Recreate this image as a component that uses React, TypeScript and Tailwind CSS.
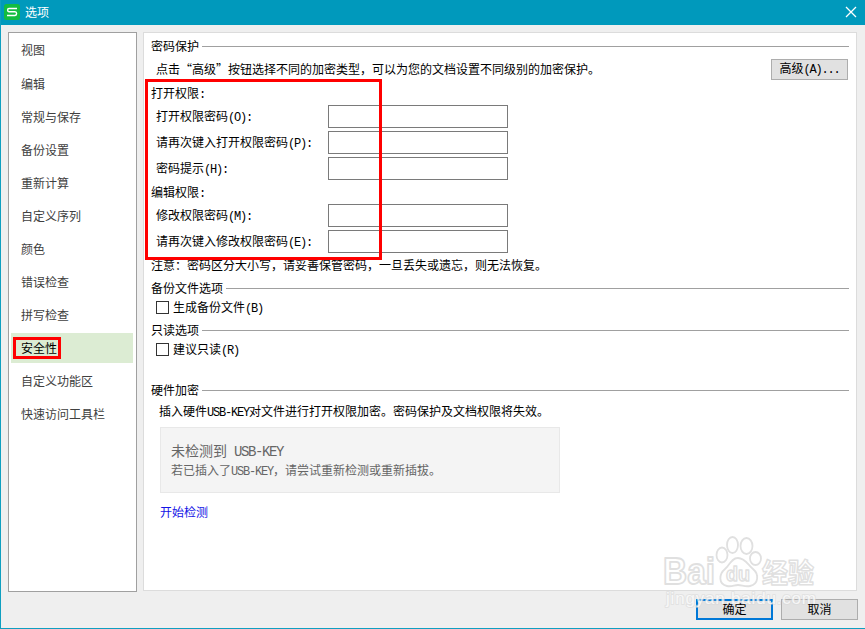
import type { ReactNode } from 'react';

const MENU = [
  '视图',
  '编辑',
  '常规与保存',
  '备份设置',
  '重新计算',
  '自定义序列',
  '颜色',
  '错误检查',
  '拼写检查',
  '安全性',
  '自定义功能区',
  '快速访问工具栏',
];

// Latin runs take half the width of a Chinese character.
function Mixed({ text }: { text: string }) {
  return (
    <span className="whitespace-pre">
      {text.split(/([\x20-\x7e]+)/).map((part, i) =>
        i % 2 ? (
          <span key={i} className="font-['Liberation_Mono',monospace] tracking-[-0.1em]">
            {part}
          </span>
        ) : (
          part
        ),
      )}
    </span>
  );
}

function Section({ title, className, titleClass = '' }: { title: string; className: string; titleClass?: string }) {
  return (
    <div className={`flex items-center gap-[3px] pr-[7px] pl-[7px] ${className}`}>
      <span className={titleClass}>{title}</span>
      <div className="h-px flex-1 bg-[#a0a0a0]" />
    </div>
  );
}

function Field({ label, className = '' }: { label: string; className?: string }) {
  return (
    <label className={`flex h-[23px] items-center pl-3 ${className}`}>
      <span className="w-[172px]">
        <Mixed text={label} />
      </span>
      <input type="password" className="h-[23px] w-[180px] border border-[#7a7a7a] bg-white outline-none" />
    </label>
  );
}

function Check({ label }: { label: string }) {
  return (
    <label className="flex h-[15px] items-center gap-1 pl-3">
      <input type="checkbox" className="size-[13px] appearance-none border border-[#333] bg-white" />
      <Mixed text={label} />
    </label>
  );
}

function Button({ children, className = 'border border-[#adadad]' }: { children: ReactNode; className?: string }) {
  return (
    <button className={`flex h-[21px] w-[77px] items-center justify-center bg-[#e1e1e1] ${className}`}>
      <span className="relative z-10 pb-px">{children}</span>
    </button>
  );
}

function Watermark() {
  return (
    <svg
      className="pointer-events-none absolute top-[530px] left-[654px]"
      width="175"
      height="84"
      fill="#fff"
      stroke="#e0e0e0"
      strokeWidth="1.8"
      strokeLinejoin="round"
    >
      <ellipse cx="67" cy="25" rx="5.5" ry="7.5" />
      <ellipse cx="77.5" cy="15" rx="5.5" ry="8" />
      <ellipse cx="91.5" cy="16" rx="6" ry="8" />
      <ellipse cx="100.5" cy="28.5" rx="5.5" ry="6.5" />
      <path d="M83 28c-7 0-8 7-13 11-6 5-7 15 2 17 5 1 7-1 11-1s7 2 12 1c9-2 9-12 3-17-5-4-8-11-15-11Z" />
      <g fontFamily="Liberation Sans, Noto Sans CJK SC, sans-serif" fontWeight="bold">
        <text x="8" y="54" fontSize="36" textLength="52" lengthAdjust="spacingAndGlyphs">
          Bai
        </text>
        <text x="71" y="51" fontSize="20" textLength="24" lengthAdjust="spacingAndGlyphs" strokeWidth="1.4">
          du
        </text>
        <text x="107" y="53" fontSize="27" textLength="52" lengthAdjust="spacingAndGlyphs" strokeWidth="1.4">
          经验
        </text>
      </g>
      <text
        x="11"
        y="74"
        fontFamily="Liberation Sans, sans-serif"
        fontSize="17"
        textLength="150"
        fillOpacity="0.75"
        stroke="#d8d8d8"
        strokeOpacity="0.55"
        strokeWidth="2"
        paintOrder="stroke"
      >
        jingyan.baidu.com
      </text>
    </svg>
  );
}

export default function App() {
  return (
    <div className="relative flex h-[629px] w-[865px] flex-col overflow-hidden border-b border-l border-[#0f9fc0] bg-[#efefef] font-['Noto_Sans_CJK_SC',sans-serif] text-[12px] leading-none text-black">
      <header className="flex h-[25px] shrink-0 items-center bg-[#0099bc] pr-2 pb-px pl-[3px] text-white">
        <svg width="16" height="16" viewBox="0 0 16 16" fill="none">
          <rect width="16" height="16" rx="2.5" fill="#12bd40" />
          <path
            d="M13 4.5H5Q3.6 4.5 3.6 6T5 7.8H11Q12.6 7.8 12.6 9.6T11 11.5H3"
            stroke="#fff"
            strokeWidth="1.4"
          />
        </svg>
        <span className="ml-[5px] flex-1 pb-px">选项</span>
        <svg width="12" height="12" viewBox="0 0 12 12" stroke="#fff" strokeWidth="1.3">
          <path d="M1 1l10 10M11 1L1 11" />
        </svg>
      </header>

      <div className="mt-[7px] flex items-start gap-1.5 pl-[7px]">
        <nav className="flex h-[560px] w-[129px] flex-col gap-[3px] border border-[#a0a0a0] bg-white px-0.5 pt-[3px] text-[#404040]">
          {MENU.map((item) => (
            <div
              key={item}
              className={`relative flex h-[30px] w-[122px] shrink-0 items-center pl-[10px] first:pb-0.5 ${
                item === '安全性' ? 'bg-[#dcecd3] text-black' : ''
              }`}
            >
              {item}
              {item === '安全性' && (
                <div className="absolute top-1 left-0.5 h-[22px] w-12 border-[3px] border-[#f00]" />
              )}
            </div>
          ))}
        </nav>

        <main className="relative h-[559px] w-[714px] border border-[#dcdcdc] bg-white">
          <Section title="密码保护" className="h-[26px]" />
          <div className="flex h-[21px] items-center justify-between pr-2 pl-3">
            <span className="pb-px">点击“高级”按钮选择不同的加密类型，可以为您的文档设置不同级别的加密保护。</span>
            <Button>
              <Mixed text="高级(A)..." />
            </Button>
          </div>

          <div className="flex h-[25px] items-center pt-0.5 pl-[7px]">
            <Mixed text="打开权限:" />
          </div>
          <Field label="打开权限密码(O):" className="mb-[3px]" />
          <Field label="请再次键入打开权限密码(P):" className="mb-[3px]" />
          <Field label="密码提示(H):" />
          <div className="flex h-6 items-center pt-0.5 pl-[7px]">
            <Mixed text="编辑权限:" />
          </div>
          <Field label="修改权限密码(M):" className="mb-[3px]" />
          <Field label="请再次键入修改权限密码(E):" />
          <div className="flex h-6 items-center pl-[7px]">
            注意：密码区分大小写，请妥善保管密码，一旦丢失或遗忘，则无法恢复。
          </div>

          <Section title="备份文件选项" className="h-[23px]" titleClass="pb-0.5" />
          <Check label="生成备份文件(B)" />
          <Section title="只读选项" className="mt-1 h-[23px]" titleClass="pb-0.5" />
          <Check label="建议只读(R)" />

          <Section title="硬件加密" className="mt-[22px] h-[23px]" titleClass="pb-0.5" />
          <div className="flex h-[18px] items-center pt-0.5 pl-[15px]">
            <Mixed text="插入硬件USB-KEY对文件进行打开权限加密。密码保护及文档权限将失效。" />
          </div>
          <div className="mt-[7px] ml-4 flex h-[66px] w-[400px] flex-col border border-[#e8e8e8] bg-[#f4f4f4] pt-3.5 pl-[10px] text-[#666]">
            <div className="text-[14px] leading-[16px]">
              <Mixed text="未检测到 USB-KEY" />
            </div>
            <div className="mt-0.5 leading-[16px]">
              <Mixed text="若已插入了USB-KEY，请尝试重新检测或重新插拔。" />
            </div>
          </div>
          <a className="mt-[9px] ml-4 flex h-5 w-fit items-center text-[#1414e6]">开始检测</a>

          <div className="pointer-events-none absolute top-[46px] left-px h-[181px] w-[237px] border-[3px] border-[#f00]" />
        </main>
      </div>

      <footer className="mt-[7px] flex justify-end gap-2 pr-[7px]">
        <Button className="border-2 border-[#0078d7]">确定</Button>
        <Button>取消</Button>
      </footer>
      <Watermark />
    </div>
  );
}
